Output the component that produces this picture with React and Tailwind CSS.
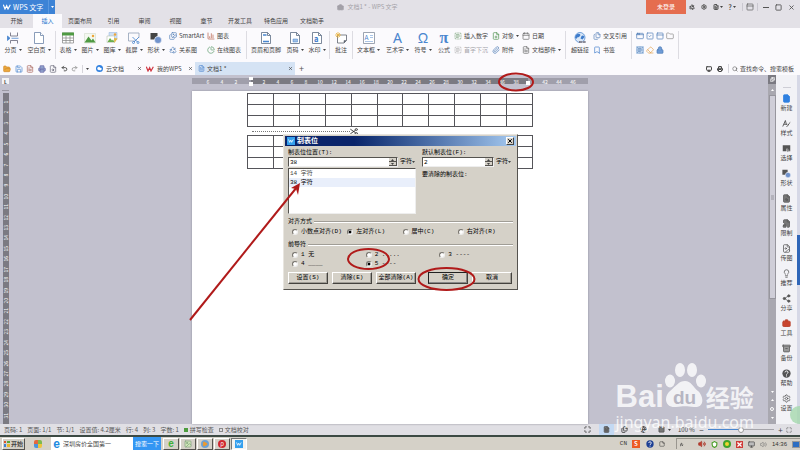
import {
  AppWindow, BarChart3, Bookmark, Briefcase, Calendar, ChevronsUp, Cloud, Eraser, File, FileImage, FilePlus,
  FileSearch, FileText, FolderOpen, Globe, Image, Images, Lightbulb, Lock, Maximize, Monitor, Paperclip,
  PanelTop, PieChart, Printer, Recycle, Redo2, Save, Search, Settings, Share2, Square, StickyNote,
  TextSelect, Undo2, Volume2, X, Files, FileLock, Folder, Play, Shield, Archive, SquareCheck,
} from 'lucide-react'

const MENU = [
  ['页面布局', 1], ['引用', 0], ['审阅', 0], ['视图', 0], ['章节', 0],
  ['开发工具', 1], ['特色应用', 1], ['文档助手', 1],
]

const SIDE = [
  ['新建', File, 'fill-[#2f80e0] text-[#2f80e0]'],
  ['样式', StyleIcon, 'text-[#555]'],
  ['选择', SelectIcon, 'text-[#555]'],
  ['形状', ShapesIcon, 'text-[#555]'],
  ['属性', FileSearch, 'fill-[#777] text-[#555]'],
  ['限制', FileLock, 'fill-[#777] text-[#555]'],
  ['传图', FileImage, 'text-[#555]'],
  ['推荐', Lightbulb, 'text-[#555]'],
  ['分享', Share2, 'fill-[#555] text-[#555]'],
  ['工具', Briefcase, 'fill-[#c8452e] text-[#b8402c]'],
  ['备份', Archive, 'fill-[#999] text-[#555]'],
  ['帮助', HelpIcon, 'text-[#555]'],
  ['设置', Settings, 'text-[#555]'],
]

function StyleIcon({ className }) {
  return (
    <svg viewBox="0 0 24 24" className={className} fill="none" stroke="currentColor" strokeWidth="2.5">
      <path d="M2 20 9 4l3 12M5 14h7M12 20c5 0 3-6 10-11M15 13l3 3" />
    </svg>
  )
}

function SelectIcon({ className }) {
  return (
    <svg viewBox="0 0 24 24" className={className} fill="currentColor">
      <path d="M2 3h20v16h-5l-5-8v8H2z" />
      <path d="m13 10 8 8-4 1-3 3z" fill="#888" />
    </svg>
  )
}

function ShapesIcon({ className }) {
  return (
    <svg viewBox="0 0 24 24" className={className}>
      <path d="M1 2h14v6a8 8 0 0 0-6 7H1z" fill="currentColor" />
      <circle cx="16" cy="16" r="7" fill="#7193cc" stroke="#fff" strokeWidth="1" />
    </svg>
  )
}

function HelpIcon({ className }) {
  return (
    <svg viewBox="0 0 24 24" className={className}>
      <circle cx="12" cy="12" r="11" fill="currentColor" />
      <path d="M8 9c0-5 8-5 8 0 0 3-4 3-4 6M12 17v3" fill="none" stroke="#fff" strokeWidth="2.5" />
    </svg>
  )
}

function PageBreakIcon({ className }) {
  return (
    <svg viewBox="0 0 24 24" className={className} fill="none" stroke="#667" strokeWidth="1.6">
      <path d="M7 1v7h14V1M7 23v-6h14v6" />
      <path d="M9 12.500h14M1 8l5 4.500L1 17z" stroke="#4a86cf" fill="#4a86cf" />
    </svg>
  )
}

function BlankPageIcon({ className }) {
  return (
    <svg viewBox="0 0 24 24" className={className} fill="#fff" stroke="#6c84a8" strokeWidth="1.6">
      <path d="M3 1h12l6 6v16H3z" />
      <path d="M15 1v6h6" />
    </svg>
  )
}

function TableIcon({ className }) {
  return (
    <svg viewBox="0 0 24 24" className={className}>
      <path d="M1 2h22v20H1z" fill="#fff" stroke="#888" strokeWidth="1.500" />
      <path d="M0 1h24v6H0z" fill="#4f9a43" />
      <path d="M1 12h22M1 17h22M8 7v15M16 7v15" stroke="#888" strokeWidth="1.500" />
    </svg>
  )
}

function PictureIcon({ className }) {
  return (
    <svg viewBox="0 0 24 24" className={className}>
      <path d="M1 3h22v19H1z" fill="#f4f8f0" stroke="#c9d4c0" />
      <path d="m1 21 8-12 6 8 3-4 5 8z" fill="#4f9a43" />
      <circle cx="18" cy="8" r="2.500" fill="#eda53a" />
    </svg>
  )
}

function GalleryIcon({ className }) {
  return (
    <svg viewBox="0 0 24 24" className={className}>
      <path d="M6 1h16v14H6z" fill="#cfe0f4" stroke="#8eb0dc" />
      <path d="M2 8h15v13H2z" fill="#fff" stroke="#a9b6a0" />
      <path d="m3 20 5-8 4 5 2-2 3 5z" fill="#6cae4c" />
      <path d="m16 12 7 1-6 9z" fill="#e7b73d" />
      <circle cx="18" cy="5" r="2.500" fill="#eda53a" />
    </svg>
  )
}

function ScreenshotIcon({ className }) {
  return (
    <svg viewBox="0 0 24 24" className={className} fill="none" stroke="#4a86cf" strokeWidth="1.700">
      <path d="M14 18H1V2h21v9" stroke="#97a5ba" />
      <path d="m9 10 10 10M22 10 12 20" />
      <circle cx="11" cy="21" r="2" />
      <circle cx="20" cy="21" r="2" />
    </svg>
  )
}

// open scissors at the end of the dotted cut line
function CutIcon({ className }) {
  return (
    <svg viewBox="0 0 24 20" className={className} fill="none" stroke="#222" strokeWidth="2.500">
      <path d="M1 3l16 11M1 17 17 6" />
      <ellipse cx="19" cy="4" rx="3.500" ry="2.500" />
      <ellipse cx="19" cy="16" rx="3.500" ry="2.500" />
    </svg>
  )
}

// page outline with a mark inside: header/footer, page number, watermark
function PageMark({ className, mark }) {
  return (
    <svg viewBox="0 0 24 24" className={className}>
      <path d="M3 1h12l6 6v16H3z" fill="#fff" stroke="#5c6c84" strokeWidth="1.600" />
      <path d="M15 1v6h6" fill="none" stroke="#5c6c84" strokeWidth="1.600" />
      {mark === 'lines' && <path d="M6 6h7M6 19h12" stroke="#4a86cf" strokeWidth="3" />}
      {mark === 'box' && <path d="M8 14h9v6H8z" fill="#9dbfe6" stroke="#4a86cf" />}
      {mark === 'a' && <text x="6" y="19" fontSize="15" fontWeight="700" fill="#3f7ccb">a</text>}
    </svg>
  )
}
const HeaderIcon = (p) => <PageMark {...p} mark="lines" />
const PageNoIcon = (p) => <PageMark {...p} mark="box" />
const WatermarkIcon = (p) => <PageMark {...p} mark="a" />

function NoteIcon({ className }) {
  return (
    <svg viewBox="0 0 24 24" className={className}>
      <path d="M5 6h18v11l-5 5H5z" fill="#fff" stroke="#5f6470" strokeWidth="1.600" />
      <path d="M18 22v-5h5" fill="#5f6470" stroke="#5f6470" />
      <path d="M6 0v12M0 6h12M2 2l8 8M10 2l-8 8" stroke="#ebb440" strokeWidth="1.600" />
    </svg>
  )
}

function TextBoxIcon({ className }) {
  return (
    <svg viewBox="0 0 24 24" className={className}>
      <path d="M1 1h22v22H1z" fill="#fff" stroke="#7c8797" strokeWidth="1.500" />
      <text x="3" y="15" fontSize="13" fill="#3f7ccb">A</text>
      <path d="M14 7h6M14 11h6M4 19h16" stroke="#8fb1df" strokeWidth="1.500" />
    </svg>
  )
}

function LinkIcon({ className }) {
  return (
    <svg viewBox="0 0 24 24" className={className}>
      <circle cx="12" cy="11" r="10" fill="#dbe8f7" stroke="#4a86cf" strokeWidth="1.500" />
      <path d="M4 6c5-5 11-2 8 2s-6 1-7 6l-3-3zM15 8c2-2 5-1 6 2l-4 5-4-2z" fill="#3f7ccb" />
      <path d="M10 20h6M17 20h6" stroke="#667" strokeWidth="4" />
      <path d="M11 20h11" stroke="#fff" strokeWidth="1" />
    </svg>
  )
}

const Omega = () => <span className="font-['Liberation_Sans'] text-[14px] leading-none text-[#4a86cf]">Ω</span>
const Pi = () => <span className="font-['Liberation_Serif'] text-[16px] font-bold leading-none text-[#4a86cf]">π</span>
const ArtA = () => <span className="font-['Noto_Sans'] text-[14px] leading-none text-[#4a86cf]">A</span>

function WLogo({ className }) {
  return (
    <svg viewBox="0 0 24 18" className={className} fill="none" stroke="currentColor" strokeWidth="3.500">
      <path d="M1 2l5 13 5-10 4 10 7-13" />
    </svg>
  )
}

function Caret({ className = '' }) {
  return (
    <svg viewBox="0 0 6 4" className={`h-[2px] w-[3px] shrink-0 fill-[#444] ${className}`}>
      <path d="M0 0h6L3 4z" />
    </svg>
  )
}

function Big({ icon: Icon, label, caret, w = 'w-[22px]' }) {
  return (
    <button className={`flex shrink-0 flex-col items-center ${w}`}>
      <span className="flex h-[14px] items-center justify-center">
        <Icon className="size-[12px]" />
      </span>
      <span className="flex h-[10px] items-center gap-[2px] whitespace-nowrap">
        {label}
        {caret && <Caret />}
      </span>
    </button>
  )
}

function Small({ icon: Icon, label, caret, color = 'text-[#5580b8]', text = '' }) {
  return (
    <button className={`flex h-[10px] items-center gap-[2px] whitespace-nowrap ${text}`}>
      <Icon className={`size-[8px] shrink-0 ${color}`} />
      {label}
      {caret && <Caret />}
    </button>
  )
}

function SmallCol({ w, children }) {
  return <div className={`flex shrink-0 flex-col gap-[4px] ${w}`}>{children}</div>
}

function Sep() {
  return <div className="mx-[1px] h-[28px] w-px shrink-0 bg-[#dddce2]" />
}

function TitleBar() {
  return (
    <header className="flex h-[14px] items-center text-[#555]">
      <button className="flex h-full w-[55px] items-center bg-[#3d83d6] pl-[3px] text-[7px] text-white">
        <WLogo className="h-[6px] w-[8px]" />
        <span className="ml-[2px] flex-1 text-left">WPS 文字</span>
        <span className="flex h-full w-[7px] items-center justify-center border-l border-[#5a97df]">
          <Caret className="fill-white" />
        </span>
      </button>
      <h1 className="flex flex-1 items-center justify-center gap-[3px] pl-[34px] text-[6px] text-[#a3a1a8]">
        <Briefcase className="size-[7px] fill-[#a3a1a8]" />
        文档1 * - WPS 文字
      </h1>
      <button className="h-full w-[40px] bg-[#e56d4f] text-white">未登录</button>
      <div className="flex w-[114px] items-center justify-between pl-[3px] pr-[5px]">
        <Recycle className="size-[6px]" strokeWidth={4} />
        <Settings className="size-[6px]" strokeWidth={4} />
        <span className="flex items-center gap-[1px]"><FileText className="size-[6px]" strokeWidth={4} /><Caret /></span>
        <span className="flex items-center gap-[1px] text-[7px] font-bold">?<Caret /></span>
        <span className="flex h-[8px] items-center border-x border-[#c9c7cf] px-[3px]">
          <PanelTop className="size-[8px]" />
        </span>
        <span className="h-px w-[6px] bg-[#555]" />
        <Square className="size-[7px]" strokeWidth={3} />
        <X className="size-[7px]" strokeWidth={3} />
      </div>
    </header>
  )
}

function MenuTabs() {
  return (
    <nav className="flex h-[14px] text-[6px]">
      <button className="w-[33px]">开始</button>
      <button className="w-[29px] bg-[#fbfafd] text-[#2b78cf]">插入</button>
      {MENU.map(([name, wide]) => (
        <button key={name} className={wide ? 'w-[36px]' : 'w-[31px]'}>{name}</button>
      ))}
    </nav>
  )
}

function Ribbon() {
  return (
    <section className="flex h-[34px] items-start overflow-hidden bg-[#fbfafd] pl-[2px] pt-[3px]">
      <Big icon={PageBreakIcon} label="分页" caret />
      <Big icon={BlankPageIcon} label="空白页" caret w="w-[30px]" />
      <Sep />
      <Big icon={TableIcon} label="表格" caret />
      <Big icon={PictureIcon} label="图片" caret />
      <Big icon={GalleryIcon} label="图库" caret />
      <Big icon={ScreenshotIcon} label="截屏" caret />
      <Big icon={ShapesIcon} label="形状" caret />
      <div className="w-[2px]" />
      <SmallCol w="w-[38px]">
        <Small icon={Images} label="SmartArt" />
        <Small icon={Recycle} label="关系图" />
      </SmallCol>
      <SmallCol w="w-[38px]">
        <Small icon={BarChart3} label="图表" color="text-[#b5573f]" />
        <Small icon={PieChart} label="在线图表" color="text-[#5b9a6a]" />
      </SmallCol>
      <Sep />
      <Big icon={HeaderIcon} label="页眉和页脚" w="w-[36px]" />
      <Big icon={PageNoIcon} label="页码" caret />
      <Big icon={WatermarkIcon} label="水印" caret />
      <Sep />
      <Big icon={NoteIcon} label="批注" w="w-[20px]" />
      <Sep />
      <Big icon={TextBoxIcon} label="文本框" caret w="w-[29px]" />
      <Big icon={ArtA} label="艺术字" caret w="w-[29px]" />
      <Big icon={Omega} label="符号" caret />
      <Big icon={Pi} label="公式" w="w-[20px]" />
      <SmallCol w="w-[38px]">
        <Small icon={TextSelect} label="插入数字" color="text-[#6d9a6d]" />
        <Small icon={TextSelect} label="首字下沉" color="text-[#aaa]" text="text-[#a5a4aa]" />
      </SmallCol>
      <SmallCol w="w-[30px]">
        <Small icon={FilePlus} label="对象" caret color="text-[#4c8f4c]" />
        <Small icon={Paperclip} label="附件" />
      </SmallCol>
      <SmallCol w="w-[42px]">
        <Small icon={Calendar} label="日期" color="text-[#666]" />
        <Small icon={FileText} label="文档部件" caret color="text-[#666]" />
      </SmallCol>
      <Sep />
      <Big icon={LinkIcon} label="超链接" w="w-[26px]" />
      <SmallCol w="w-[37px]">
        <Small icon={Files} label="交叉引用" />
        <Small icon={Bookmark} label="书签" color="text-[#3f7ccb]" />
      </SmallCol>
      <Sep />
      <div className="grid grid-cols-4 gap-x-[2px] gap-y-[6px] px-[3px] pt-[1px] text-[#4a78b5]">
        <AppWindow className="size-[8px]" />
        <SquareCheck className="size-[8px]" />
        <PanelTop className="size-[8px]" />
        <Folder className="size-[8px] text-[#888]" />
        <TextSelect className="size-[8px] bg-[#c5d8ee]" />
        <Eraser className="size-[8px] text-[#e2a04a]" />
        <Lock className="size-[8px] fill-[#6e9bd6]" />
      </div>
      <Sep />
    </section>
  )
}

function DocTabs() {
  return (
    <section className="flex h-[13px] items-center bg-[#fbfafd] text-[6px]">
      <div className="flex w-[94px] shrink-0 items-center justify-between pl-[3px] pr-[5px]">
        <FolderOpen className="size-[8px] fill-[#eba83e] text-[#d08a2a]" />
        <Save className="size-[8px] text-[#4a86cf]" />
        <FileText className="size-[8px] text-[#a9645a]" />
        <Printer className="size-[8px] fill-[#8fa0cc] text-[#6a6aa8]" />
        <FileSearch className="size-[8px] text-[#667]" />
        <Undo2 className="size-[7px] text-[#444]" strokeWidth={3} />
        <Redo2 className="size-[7px] text-[#999]" strokeWidth={3} />
        <span className="h-[8px] w-px bg-[#d5d4da]" />
        <Caret />
      </div>
      <div className="flex w-[50px] shrink-0 items-center gap-[3px] pl-[2px]">
        <Cloud className="size-[7px] rounded-full bg-[#2f80e0] fill-white p-px text-white" />
        <span className="flex-1">云文档</span>
        <X className="mr-[2px] size-[5px]" strokeWidth={3} />
      </div>
      <div className="flex w-[51px] shrink-0 items-center gap-[3px] pl-[2px]">
        <WLogo className="h-[6px] w-[8px] text-[#d0343f]" />
        <span className="flex-1 whitespace-nowrap">我的WPS</span>
        <X className="mr-[2px] size-[5px]" strokeWidth={3} />
      </div>
      <div className="flex h-full w-[100px] shrink-0 items-center gap-[2px] bg-[#d5e3f4] pl-[3px]">
        <FileText className="size-[7px] text-[#3f7ccb]" />
        <span className="flex-1">文档1 *</span>
        <X className="mr-[2px] size-[5px]" strokeWidth={3} />
      </div>
      <button className="ml-[4px] text-[9px] text-[#555]">+</button>
      <div className="ml-auto flex shrink-0 items-center gap-[5px] pr-[4px]">
        <Monitor className="size-[6px]" strokeWidth={4} />
        <Printer className="size-[6px]" strokeWidth={4} />
        <label className="flex items-center gap-[2px] border-l border-[#d5d4da] pl-[3px]">
          <Search className="size-[6px]" />
          <input
            className="w-[56px] bg-transparent text-[6px] placeholder:text-[#444] focus:outline-none"
            placeholder="查找命令、搜索模板"
          />
        </label>
      </div>
    </section>
  )
}

function RulerCells({ values }) {
  return values.map((n) => <span key={n} className="w-[14px] text-center">{n}</span>)
}

function HRuler() {
  const middle = Array.from({ length: 19 }, (_, i) => (i + 1) * 2)
  return (
    <div className="mt-[3px] flex h-[6px] w-[396px] shrink-0 items-center text-[5px] text-white">
      <div className="flex h-full w-[59px] items-center bg-[#a09fab] pl-[9px]">
        <RulerCells values={[6, 4, 2]} />
      </div>
      <div className="relative flex h-full w-[277px] items-center bg-[#7b7a82] pl-[6px]">
        <RulerCells values={middle} />
        <span className="absolute -left-[2px] -top-[1px] h-[3px] w-[4px] bg-white" />
        <span className="absolute -bottom-[2px] -left-[2px] h-[4px] w-[4px] bg-white" />
        <span className="absolute -bottom-[1px] -right-[2px] h-[4px] w-[4px] bg-white" />
      </div>
      <div className="flex h-full flex-1 items-center bg-[#a09fab] pl-[10px]">
        <RulerCells values={[42, 44, 46]} />
      </div>
    </div>
  )
}

function VRuler() {
  return (
    <div className="flex w-[12px] shrink-0 flex-col pl-[2px]">
      <span className="mt-[3px] flex h-[6px] w-[7px] shrink-0 items-center justify-center bg-[#f3f3f5] text-[5px] font-bold">L</span>
      <span className="mt-[6px] h-px w-[7px] shrink-0 bg-[#9a99a3]" />
      <div className="ml-[1px] mt-[2px] flex min-h-0 w-[6px] flex-1 flex-col bg-[#7b7a82] pb-[4px] pt-[4px] text-[5px] text-white">
        {Array.from({ length: 31 }, (_, i) => (
          <span key={i} className="flex min-h-0 flex-1 rotate-180 items-center justify-center leading-[6px] [writing-mode:vertical-rl]">
            {i + 1}
          </span>
        ))}
      </div>
    </div>
  )
}

function DocTable() {
  return (
    <table className="ml-[55px] w-[286px] table-fixed border-collapse">
      <tbody>
        {[0, 1, 2].map((r) => (
          <tr key={r} className="h-[11px]">
            {Array.from({ length: 11 }, (_, c) => (
              <td key={c} className="border border-[#55555a] p-0" />
            ))}
          </tr>
        ))}
      </tbody>
    </table>
  )
}

function Spin({ label, value, w }) {
  return (
    <div className="flex flex-col">
      <label className="flex h-[9px] items-center" htmlFor={label}>{label}</label>
      <div className="flex items-center gap-[2px]">
        <span className={`flex h-[10px] border border-[#55534f] border-b-[#eee] border-r-[#eee] bg-white ${w}`}>
          <input id={label} defaultValue={value} className="min-w-0 flex-1 pl-[1px] focus:outline-none" />
          <span className="flex w-[8px] flex-col bg-[#d5d1c8]">
            <button className="flex flex-1 items-center justify-center border-b border-r border-[#55534f]"><Caret className="rotate-180" /></button>
            <button className="flex flex-1 items-center justify-center border-b border-r border-[#55534f]"><Caret /></button>
          </span>
        </span>
        <button className="flex items-center whitespace-nowrap">字符<Caret /></button>
      </div>
    </div>
  )
}

function Radio({ name, label, checked }) {
  return (
    <label className="flex h-[9px] items-center gap-[3px] whitespace-pre">
      <input
        type="radio"
        name={name}
        defaultChecked={checked}
        className="size-[6px] shrink-0 appearance-none rounded-full border border-[#77746e] border-b-[#eee] border-r-[#eee] bg-white bg-clip-padding checked:bg-[radial-gradient(#000_1px,#fff_2px)]"
      />
      {label}
    </label>
  )
}

function Legend({ children }) {
  return (
    <div className="flex h-[9px] items-center gap-[2px]">
      {children}
      <span className="h-[2px] flex-1 border-b border-t border-b-white border-t-[#a09d96]" />
    </div>
  )
}

function DialogButton({ children, primary }) {
  return (
    <button
      className={`h-[12px] w-[40px] border border-b-[#44423e] border-r-[#44423e] ${
        primary ? 'border-[#222] shadow-[inset_-1px_-1px_0_#888]' : 'border-white shadow-[inset_-1px_-1px_0_#a09d96]'
      }`}
    >
      {children}
    </button>
  )
}

function TabStopDialog() {
  return (
    <div
      role="dialog"
      aria-label="制表位"
      className="absolute left-[91px] top-[43px] w-[235px] border border-b-[#55534f] border-l-[#e8e5df] border-r-[#55534f] border-t-[#e8e5df] bg-[#d5d1c8] pb-[5px] pt-[1px] font-['Liberation_Mono','Noto_Sans_CJK_SC',monospace] text-[6px] text-black"
    >
      <div className="mx-[1px] flex h-[10px] items-center gap-[2px] bg-linear-to-r from-[#0a246a] from-30% to-[#a6caf0] px-[2px] text-[7px] font-bold text-white">
        <span className="flex size-[8px] items-center justify-center bg-[#35a0ee]"><WLogo className="h-[4px] w-[6px]" /></span>
        <span className="flex-1">制表位</span>
        <button className="flex size-[8px] items-center justify-center border border-b-[#444] border-r-[#444] border-white bg-[#d5d1c8] text-black">
          <X className="size-[6px]" strokeWidth={4} />
        </button>
      </div>
      <div className="px-[4px] pt-[2px]">
        <div className="flex gap-[6px]">
          <div className="w-[128px]">
            <Spin label="制表位位置(T):" value="38" w="w-[110px]" />
            <div role="listbox" className="mt-[1px] h-[46px] border border-[#55534f] border-b-[#eee] border-r-[#eee] bg-white">
              <div role="option" aria-selected="false" className="flex h-[9px] items-center pl-[1px] text-[#444]">14 字符</div>
              <div role="option" aria-selected="true" className="flex h-[9px] items-center bg-[#e9effb] pl-[1px]">38 字符</div>
            </div>
          </div>
          <div>
            <Spin label="默认制表位(F):" value="2" w="w-[72px]" />
            <p className="mt-[5px]">要清除的制表位:</p>
          </div>
        </div>
        <div className="mt-[3px]"><Legend>对齐方式</Legend></div>
        <div className="grid grid-cols-4 pl-[4px] pt-[1px]">
          <Radio name="align" label="小数点对齐(D)" />
          <Radio name="align" label="左对齐(L)" checked />
          <Radio name="align" label="居中(C)" />
          <Radio name="align" label="右对齐(R)" />
        </div>
        <div className="mt-[4px]"><Legend>前导符</Legend></div>
        <div className="grid grid-cols-3 pl-[4px] pt-[1px]">
          <Radio name="lead" label="1 无" />
          <Radio name="lead" label="2 ....." />
          <Radio name="lead" label="3 ----" />
          <Radio name="lead" label="4 ____" />
          <Radio name="lead" label="5 ----" checked />
        </div>
        <div className="mt-[4px] flex gap-[4px]">
          <DialogButton>设置(S)</DialogButton>
          <DialogButton>清除(E)</DialogButton>
          <DialogButton>全部清除(A)</DialogButton>
          <span className="w-[4px]" />
          <DialogButton primary>确定</DialogButton>
          <DialogButton>取消</DialogButton>
        </div>
      </div>
    </div>
  )
}

function Marks() {
  return (
    <svg
      viewBox="192 91 396 333"
      className="pointer-events-none absolute left-0 top-0 h-[333px] w-[396px] overflow-visible"
      fill="none"
      stroke="#b01a1a"
      strokeWidth="2"
    >
      <ellipse cx="516" cy="82" rx="17" ry="8.500" />
      <ellipse cx="368.500" cy="259" rx="20.500" ry="10" />
      <ellipse cx="446.500" cy="279" rx="28" ry="11" />
      <path d="M190 320 297 187" />
      <path d="M300 183l-9 5 5 1 2 6z" fill="#b01a1a" stroke="none" />
    </svg>
  )
}

function Workspace() {
  return (
    <main className="flex min-h-0 flex-1 bg-[#c2c1ce]">
      <VRuler />
      <div className="flex min-w-0 flex-1 flex-col items-center">
        <HRuler />
        <div className="relative mt-[7px] w-[396px] flex-1 bg-white pt-[2px] shadow-[0_0_2px_#8d8c98]">
          <DocTable />
          <div className="flex h-[8px] items-center pl-[60px]">
            <span className="w-[98px] border-t border-dotted border-[#777]" />
            <CutIcon className="h-[7px] w-[8px]" />
          </div>
          <DocTable />
          <TabStopDialog />
          <Marks />
        </div>
      </div>
      <div className="flex w-[8px] shrink-0 flex-col items-center bg-[#a9a8b0] text-[5px] text-white">
        <span className="flex h-[9px] w-full items-center justify-center bg-[#7b7a82]"><Images className="size-[5px]" strokeWidth={3} /></span>
        <span className="flex h-[11px] items-center"><Caret className="rotate-180 fill-white" /></span>
        <span className="flex w-[7px] basis-[204px] items-center justify-center border border-[#97969e] bg-[#cfced8]">
          <span className="h-[5px] w-[3px] bg-[#b3b2bb]" />
        </span>
        <span className="mt-auto flex h-[36px] flex-col items-center justify-around pb-[2px]">
          <Caret className="fill-white" />
          <Caret className="rotate-180 fill-white" />
          <span className="size-[4px] rounded-full border border-white" />
          <Caret className="fill-white" />
        </span>
      </div>
      <aside className="flex w-[21px] shrink-0 flex-col items-center bg-[#f2f2f6] pt-[12px]">
        <span className="h-px w-[8px] bg-[#ceced6]" />
        <div className="mt-[6px] flex flex-col">
          {SIDE.map(([name, Icon, cls]) => (
            <button key={name} className="flex h-[25px] flex-col items-center text-[6px]">
              <Icon className={`size-[9px] ${cls}`} />
              <span className="mt-[1px] leading-[8px]">{name}</span>
            </button>
          ))}
        </div>
      </aside>
      <div className="w-[3px] shrink-0 bg-[#d6d8e6] pt-[160px]">
        <div className="h-[50px] bg-[#2f66b8]" />
      </div>
    </main>
  )
}

function StatusBar() {
  return (
    <footer className="flex h-[11px] shrink-0 items-center bg-[#e0dfe4] text-[6px] text-[#555]">
      <div className="flex flex-1 items-center gap-[5px] whitespace-nowrap pl-[4px]">
        <span>页码: 1</span>
        <span>页面: 1/1</span>
        <span>节: 1/1</span>
        <span>设置值: 4.2厘米</span>
        <span>行: 4</span>
        <span>列: 3</span>
        <span>字数: 1</span>
        <span className="flex items-center gap-[2px]"><i className="size-[4px] bg-[#4d9c3f]" />拼写检查</span>
        <span className="flex items-center gap-[2px]"><i className="size-[4px] border border-[#888]" />文档校对</span>
      </div>
      <div className="flex h-full items-center text-[#444]">
        <Maximize className="size-[7px]" strokeWidth={3} />
        <span className="ml-[8px] flex h-full w-[15px] items-center justify-center bg-[#c3d9f3]"><FileText className="size-[7px] fill-[#777]" /></span>
        <Files className="ml-[7px] size-[7px]" strokeWidth={3} />
        <Globe className="ml-[12px] size-[7px]" strokeWidth={3} />
        <Square className="ml-[11px] size-[7px] fill-[#777]" />
        <span className="ml-[3px]"><Caret /></span>
        <span className="ml-[7px] w-[19px] whitespace-nowrap">100 %</span>
        <button className="ml-[2px] w-[5px] text-[8px] leading-none">−</button>
        <input
          type="range"
          aria-label="缩放"
          defaultValue="50"
          className="mx-[4px] h-px w-[66px] appearance-none bg-linear-to-r from-[#4a86cf] from-50% to-[#a5a4aa] to-50% [&::-webkit-slider-thumb]:size-[6px] [&::-webkit-slider-thumb]:appearance-none [&::-webkit-slider-thumb]:rounded-full [&::-webkit-slider-thumb]:border [&::-webkit-slider-thumb]:border-[#999] [&::-webkit-slider-thumb]:bg-white"
        />
        <button className="w-[5px] text-[8px] leading-none">+</button>
        <Maximize className="ml-[3px] mr-[8px] size-[6px]" />
      </div>
    </footer>
  )
}

function TaskButton({ active, children }) {
  return (
    <button
      className={`flex h-[12px] w-[16px] items-center justify-center border ${
        active ? 'border-[#777] border-b-white border-r-white bg-[#f4f3ef]' : 'border-white border-b-[#55534f] border-r-[#55534f]'
      }`}
    >
      {children}
    </button>
  )
}

function TaskBar() {
  return (
    <footer className="flex h-[15px] shrink-0 items-center border-t-2 border-[#3c4a44] bg-[#d5d1c8] pl-[2px] text-[6px]">
      <button className="flex h-[12px] w-[23px] items-center justify-center gap-[1px] border border-white border-b-[#55534f] border-r-[#55534f] font-bold">
        <span className="grid size-[6px] grid-cols-2 gap-px">
          <i className="bg-[#d9532c]" /><i className="bg-[#57a63a]" /><i className="bg-[#3d7fd0]" /><i className="bg-[#e8b82e]" />
        </span>
        开始
      </button>
      <span className="mx-[9px] grid size-[8px] grid-cols-2 overflow-hidden rounded-[2px]">
        <i className="bg-[#e4673f]" /><i className="bg-[#7dba4c]" /><i className="bg-[#4b93dd]" /><i className="bg-[#edc33d]" />
      </span>
      <div className="flex h-full w-[110px] items-center bg-white">
        <span className="w-[11px] text-center font-['Liberation_Sans'] text-[12px] font-bold leading-none text-[#1e8be0]">e</span>
        <input aria-label="搜索" defaultValue="深圳房价全国第一" className="min-w-0 flex-1 pl-[1px] text-[6px] focus:outline-none" />
        <button className="h-full w-[28px] bg-[#3496f3] text-white">搜索一下</button>
      </div>
      <div className="ml-[2px] flex gap-px">
        <TaskButton><span className="font-['Liberation_Sans'] text-[10px] font-bold leading-none text-[#3faf36]">e</span></TaskButton>
        <TaskButton><Image className="size-[8px] fill-[#cfe5b8] text-[#7b9f7a]" /></TaskButton>
        <TaskButton><Play className="size-[8px] rounded-full bg-[#6aa2d8] fill-[#ef9a2c] p-px text-[#ef9a2c]" /></TaskButton>
        <TaskButton><span className="flex size-[8px] items-center justify-center rounded-full bg-[#d02630] text-white">ρ</span></TaskButton>
        <TaskButton active><span className="flex size-[8px] items-center justify-center bg-[#35a0ee] text-white"><WLogo className="h-[4px] w-[6px]" /></span></TaskButton>
      </div>
      <div className="ml-auto flex h-[11px] items-center text-[#333]">
        <span className="mr-[5px] font-['Liberation_Mono']">CN</span>
        <span className="mr-[6px] flex size-[8px] items-center justify-center bg-[#ec5a24] font-bold text-white">S</span>
        <HelpIcon className="mr-[5px] size-[8px] text-[#1c3f94]" />
        <StickyNote className="mr-[11px] size-[6px]" />
        <div className="flex h-full items-center gap-[5px] border-l border-t border-[#99968f] pl-[2px]">
          <ChevronsUp className="mr-[9px] size-[5px]" strokeWidth={4} />
          <Volume2 className="size-[8px] fill-[#c23b2c] text-[#a03529]" />
          <Shield className="size-[7px] fill-white text-[#4d9f2c]" strokeWidth={4} />
          <span className="size-[8px] rounded-full border-2 border-[#3fa32c] bg-[#f0d631]" />
          <X className="size-[7px] bg-[#cf3a36] text-white" strokeWidth={4} />
          <Monitor className="size-[7px] fill-[#bbb]" />
          <Volume2 className="size-[7px] text-[#777]" />
          <span className="font-['Liberation_Sans']">14:36</span>
          <span className="h-[7px] w-[8px] border border-[#999] bg-[#2d6ec2]" />
        </div>
      </div>
    </footer>
  )
}

function BaiduMark() {
  return (
    <div className="pointer-events-none absolute bottom-[18px] right-[46px] flex flex-col items-center text-white opacity-80">
      <div className="flex h-[48px] items-end whitespace-nowrap leading-none">
        <span className="font-['Liberation_Sans'] text-[31px] font-bold">Bai</span>
        <svg viewBox="0 0 42 48" className="mb-[3px] h-[48px] w-[42px]" fill="currentColor">
          <ellipse cx="6" cy="20" rx="5" ry="6.500" />
          <ellipse cx="16" cy="9" rx="5" ry="7" />
          <ellipse cx="28" cy="9" rx="5" ry="7" />
          <ellipse cx="37" cy="20" rx="5" ry="6.500" />
          <path d="M21 20c6 0 8 6 13 10s8 17-4 16c-7-1-11-1-18 0-12 1-12-11-6-16s9-10 15-10z" />
          <text x="9" y="43" fontSize="19" fontWeight="700" fill="#b4b3c0" fontFamily="Liberation Sans">du</text>
        </svg>
        <span className="pb-[3px] text-[24px] font-bold">经验</span>
      </div>
      <div className="font-['Noto_Sans'] text-[16px] leading-[20px]">jingyan.baidu.com</div>
    </div>
  )
}

export default function App() {
  return (
    <div className="relative flex h-screen flex-col overflow-hidden bg-[#e3e1e7] font-['Noto_Sans_CJK_SC',sans-serif] text-[6px] leading-none text-[#444]">
      <TitleBar />
      <MenuTabs />
      <Ribbon />
      <DocTabs />
      <Workspace />
      <StatusBar />
      <TaskBar />
      <BaiduMark />
      <span className="absolute -right-[8px] bottom-[26px] size-[18px] rounded-full bg-[#a5d8ae] opacity-80" />
    </div>
  )
}
